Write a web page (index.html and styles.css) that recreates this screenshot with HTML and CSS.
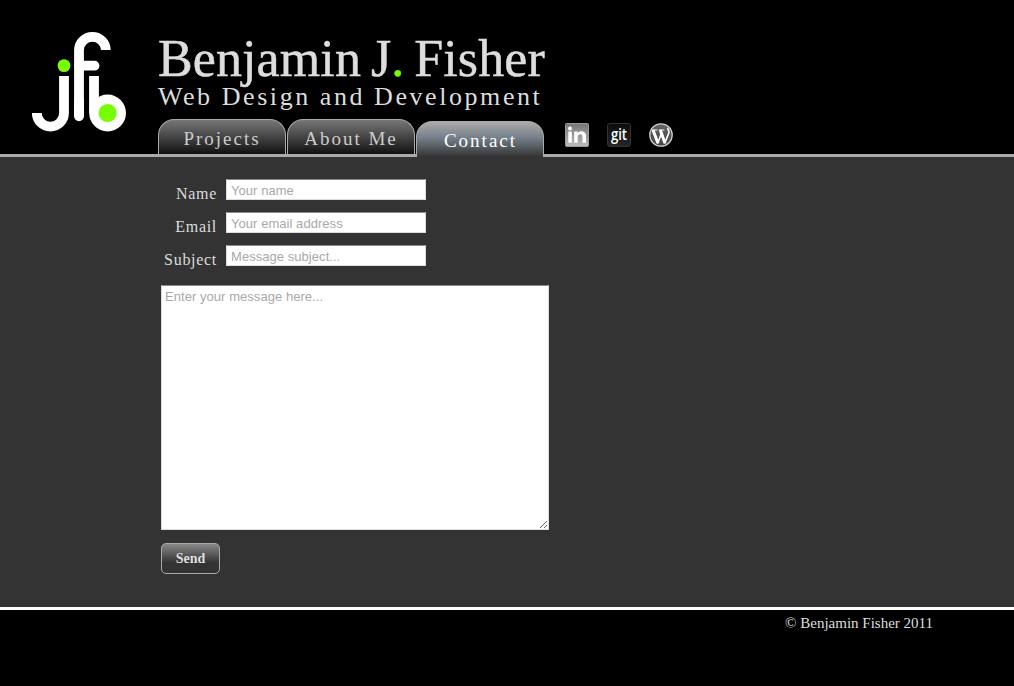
FILE: index.html
```html
<!DOCTYPE html>
<html lang="en">
<head>
<meta charset="utf-8">
<title>Benjamin J. Fisher - Contact</title>
<link rel="stylesheet" href="styles.css">
</head>
<body>
<header class="header">
  <svg class="logo" width="94" height="100" viewBox="32 32 94 100">
    <g fill="none" stroke="#fff" stroke-width="9.8">
      <path d="M64 76V113A13.6 13.6 0 0 1 36.8 113"/>
      <path d="M105.8 50A13.4 13.1 0 0 0 79 50V117"/>
      <path d="M79 65.7H94.5M79 100V116.3" stroke-linecap="round"/>
      <path d="M94 76V113"/>
    </g>
    <circle cx="107.6" cy="113" r="18.4" fill="#fff"/>
    <circle cx="107.6" cy="113" r="9.1" fill="#7f0"/>
    <circle cx="64" cy="65.6" r="6.4" fill="#7f0"/>
  </svg>
  <div class="masthead">
    <h1 class="title">Benjamin J<span class="dot">.</span> Fisher</h1>
    <p class="tagline">Web Design and Development</p>
    <nav class="nav">
      <a class="tab">Projects</a>
      <a class="tab">About Me</a>
      <a class="tab tab-active">Contact</a>
      <div class="social">
        <svg width="24" height="24" viewBox="0 0 24 24">
          <defs><linearGradient id="li" x2="0" y2="1"><stop stop-color="#777"/><stop offset="1" stop-color="#bbb"/></linearGradient></defs>
          <rect x=".5" y=".5" width="23" height="23" rx="1" fill="url(#li)" stroke="#999"/>
          <path d="M3.3 8.5H6.8V19.8H3.3ZM9.2 8.5H12.6V10.2C14.7 7.2 21 7.7 21 13V19.8H17.5V13.7C17.5 10.2 12.7 10.5 12.7 13.7V19.8H9.2Z" fill="#fff"/>
          <circle cx="5" cy="5.5" r="2" fill="#fff"/>
        </svg>
        <svg width="24" height="24" viewBox="0 0 24 24">
          <defs><linearGradient id="gt" x2="0" y2="1"><stop stop-color="#0c0c0c"/><stop offset="1" stop-color="#262626"/></linearGradient></defs>
          <rect x=".5" y=".5" width="23" height="23" rx="2.5" fill="url(#gt)" stroke="#333"/>
          <text class="git" x="4" y="17" textLength="16" lengthAdjust="spacingAndGlyphs">git</text>
        </svg>
        <svg width="24" height="24" viewBox="0 0 24 24">
          <defs>
            <linearGradient id="wp" x2="0" y2="1"><stop stop-color="#666"/><stop offset="1" stop-color="#444"/></linearGradient>
            <clipPath id="disc"><circle cx="12" cy="12" r="10.3"/></clipPath>
          </defs>
          <circle cx="12" cy="12" r="11.2" fill="url(#wp)" stroke="#ccc" stroke-width="1.3"/>
          <g clip-path="url(#disc)" fill="none" stroke="#fff">
            <path d="M4 7L9 20.2M11.3 7L16 20.2" stroke-width="3"/>
            <path d="M8.7 20.5L12.5 10M15.7 20.5L19.8 10C20.6 7.6 18.7 7 18.8 4.8" stroke-width="1.6"/>
            <path d="M2 7H8.3M9.7 7H15.3" stroke-width="1.1"/>
          </g>
        </svg>
      </div>
    </nav>
  </div>
</header>
<main class="content">
  <form class="form">
    <div class="row"><label class="label" for="name">Name</label><input class="field" id="name" placeholder="Your name"></div>
    <div class="row"><label class="label" for="email">Email</label><input class="field" id="email" placeholder="Your email address"></div>
    <div class="row"><label class="label" for="subject">Subject</label><input class="field" id="subject" placeholder="Message subject..."></div>
    <textarea class="message" placeholder="Enter your message here..."></textarea>
    <button class="send" type="button">Send</button>
  </form>
</main>
<footer class="footer">© Benjamin Fisher 2011</footer>
</body>
</html>
```
FILE: styles.css
```css
* { box-sizing: border-box; }
body {
  margin: 0;
  height: 686px;
  overflow: hidden;
  background: #000;
  color: #ddd;
  font-family: "Liberation Serif", serif;
}
.header {
  display: flex;
  height: 157px;
  padding-left: 32px;
  border-bottom: 3px solid #aaa;
}
.logo { margin-top: 32px; flex: none; }
.masthead { margin-left: 32px; padding-top: 29px; }
.title {
  margin: 0;
  height: 54px;
  line-height: 60px;
  font-size: 52px;
  font-weight: 400;
  letter-spacing: 0.1px;
  word-spacing: -3.2px;
  white-space: nowrap;
  -webkit-text-stroke: 0.5px;
}
.dot { color: #7f0; }
.tagline {
  margin: 0;
  height: 36px;
  line-height: 28px;
  font-size: 26px;
  letter-spacing: 2.56px;
  white-space: nowrap;
}
.nav { display: flex; gap: 1px; height: 38px; }
.tab {
  width: 128px;
  height: 35px;
  border: 1px solid #aaa;
  border-bottom: 0;
  border-radius: 16px 16px 0 0;
  background: linear-gradient(#777, #111);
  color: #ccc;
  font-size: 19px;
  line-height: 38px;
  letter-spacing: 2px;
  text-align: center;
}
.tab-active {
  height: 36px;
  margin-top: 2px;
  padding-left: 1px;
  background: linear-gradient(#aaa, #75808a 45%, #333);
  color: #fff;
}
.social { display: flex; gap: 18px; margin: 4px 0 0 20px; }
.git { font: 600 16px "Open Sans", sans-serif; fill: #fff; }
.content {
  height: 450px;
  padding: 22px 0 0 161px;
  background: #333;
}
.form { width: 388px; }
.row { display: flex; height: 33px; }
.label {
  width: 56px;
  margin-right: 9px;
  padding-top: 6px;
  font-size: 16px;
  line-height: 18px;
  letter-spacing: 0.7px;
  text-align: right;
}
.field, .message {
  display: block;
  margin: 0;
  border: 1px solid #ddd;
  border-top-color: #888;
  background: #fff;
  font: 13px "Liberation Sans", Arial, sans-serif;
  letter-spacing: 0.05px;
}
.field { width: 200px; height: 21px; padding: 2px 4px 0; }
.message {
  width: 388px;
  height: 245px;
  margin-top: 7px;
  padding: 3px;
}
.field::placeholder, .message::placeholder { color: #a9a9a9; }
.send {
  display: block;
  width: 59px;
  height: 31px;
  margin-top: 13px;
  padding: 0;
  border: 1px solid #aaa;
  border-radius: 5px;
  background: linear-gradient(#888, #333 65%);
  color: #ddd;
  font: bold 14px "Liberation Serif", serif;
}
.footer {
  padding: 4px 81px 0 0;
  border-top: 3px solid #fff;
  font-size: 15px;
  line-height: 18px;
  text-align: right;
}
```
